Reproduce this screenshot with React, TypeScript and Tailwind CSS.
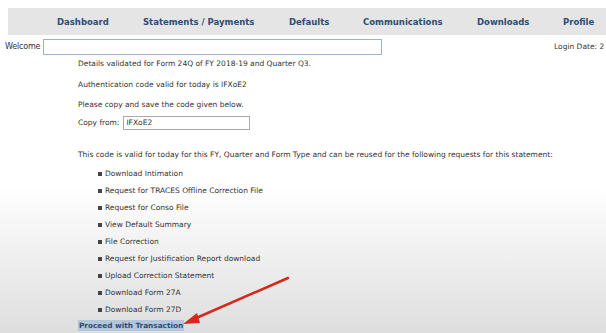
const navItems = [
  { label: "Dashboard", w: "w-[86px]" },
  { label: "Statements / Payments", w: "w-[146px]" },
  { label: "Defaults", w: "w-[74px]" },
  { label: "Communications", w: "w-[114px]" },
  { label: "Downloads", w: "w-[86px]" },
  { label: "Profile", w: "" },
];

const requests = [
  "Download Intimation",
  "Request for TRACES Offline Correction File",
  "Request for Conso File",
  "View Default Summary",
  "File Correction",
  "Request for Justification Report download",
  "Upload Correction Statement",
  "Download Form 27A",
  "Download Form 27D",
];

export default function App() {
  return (
    <div
      className="relative h-[333px] w-[606px] overflow-hidden bg-[linear-gradient(to_bottom,#ffffff_0%,#ffffff_56%,#dedede_100%)] text-[#333]"
      style={{ fontFamily: "'DejaVu Sans', Tahoma, sans-serif" }}
    >
      {/* top menu */}
      <div className="ml-2 mt-2 flex h-[27px] items-center bg-[#e5e5e5] pb-[1px] pl-[49px] pt-[3px] text-[8.5px] font-bold text-[#2c4d74]">
        {navItems.map((n) => (
          <span key={n.label} className={n.w}>
            {n.label}
          </span>
        ))}
      </div>

      <div className="mt-1 flex items-center text-[7.5px]">
        <span className="ml-[5px] w-[38px] text-[8px] tracking-[-0.2px]">Welcome</span>
        <div className="h-[16px] w-[339px] border border-[#9db3cf] bg-white" />
        <span className="ml-[172px] whitespace-nowrap">Login Date: 2</span>
      </div>

      <div className="ml-[78px] text-[7.5px] leading-none">
        <p className="mt-[5px]">Details validated for Form 24Q of FY 2018-19 and Quarter Q3.</p>
        <p className="mt-[13px]">Authentication code valid for today is IFXoE2</p>
        <p className="mt-[13px]">Please copy and save the code given below.</p>
        <div className="mt-[7px] flex items-center">
          <span>Copy from:</span>
          <div className="ml-[4px] flex h-[14px] w-[127px] items-center border border-[#aaa] bg-white pl-[2px]">
            IFXoE2
          </div>
        </div>
        <p className="mt-[21px] whitespace-nowrap">
          This code is valid for today for this FY, Quarter and Form Type and can be reused for the following
          requests for this statement:
        </p>
        <ul className="ml-[20px] mt-[7px]">
          {requests.map((r) => (
            <li key={r} className="flex h-[17px] items-center">
              <span className="mr-[3px] inline-block h-[4px] w-[4px] bg-[#444]" />
              {r}
            </li>
          ))}
        </ul>
        <div className="mt-[2px] inline-block bg-[#b3c6db] px-[1px] py-[2px] text-[7.3px] font-bold text-[#2c4d74]">
          Proceed with Transaction
        </div>
      </div>

      {/* red arrow pointing at the button */}
      <svg className="absolute left-0 top-0" width="606" height="333">
        <line x1="288" y1="278" x2="194" y2="319" stroke="#d42a1e" strokeWidth="2.5" strokeLinecap="round" />
        <polygon points="183,324 197,313 200,323" fill="#d42a1e" />
      </svg>
    </div>
  );
}
